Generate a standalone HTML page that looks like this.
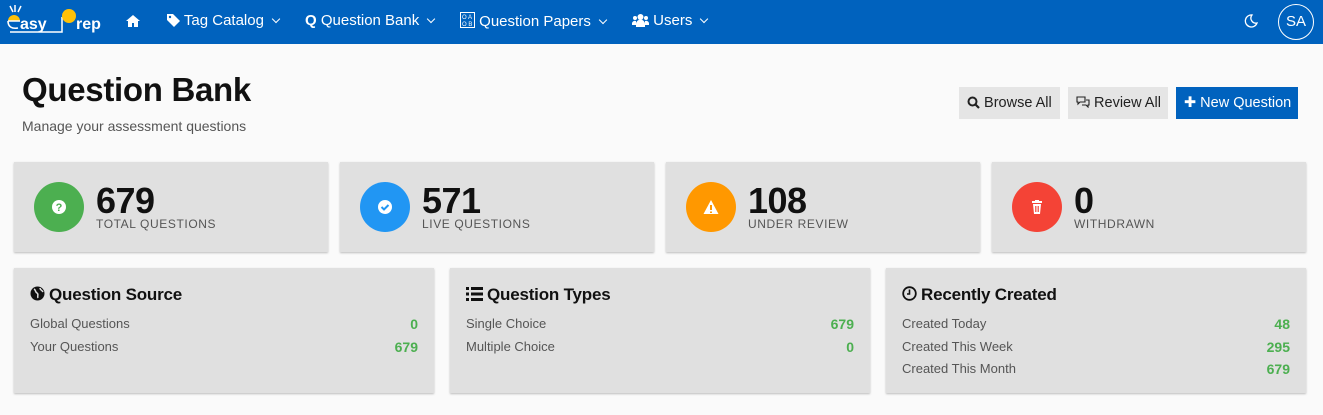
<!DOCTYPE html>
<html><head><style>
*{box-sizing:border-box;margin:0;padding:0}
body{width:1323px;height:415px;overflow:hidden;background:#fafafa;font-family:"Liberation Sans",sans-serif;position:relative}
.nav{position:absolute;left:0;top:0;width:1323px;height:44px;background:#0062be;color:#fff}
.ni{position:absolute;top:12px;font-size:15px;white-space:nowrap}
.ni svg{vertical-align:-2px}
.car{display:inline-block;width:6px;height:6px;border-right:1.3px solid #fff;border-bottom:1.3px solid #fff;transform:rotate(45deg);margin-left:9px;vertical-align:3px}
.av{position:absolute;left:1278px;top:4px;width:36px;height:36px;border:1.5px solid #fff;border-radius:50%;font-size:15px;text-align:center;line-height:33px}
h1{position:absolute;left:22px;top:71px;font-size:33px;font-weight:bold;color:#111;letter-spacing:-0.3px}
.sub{position:absolute;left:22px;top:118px;font-size:14px;color:#555}
.btn{position:absolute;top:87px;height:32px;line-height:32px;font-size:14.5px;background:#e5e5e5;color:#222;padding-left:8px}
.btn.b{background:#0062be;color:#fff}
.sc{position:absolute;top:162px;width:314px;height:90px;background:#e0e0e0;box-shadow:0 1px 2px rgba(0,0,0,.25)}
.ci{position:absolute;left:20px;top:20px;width:50px;height:50px;border-radius:50%}
.ci svg{position:absolute;left:17px;top:17px}
.num{position:absolute;left:82px;top:18px;font-size:36px;font-weight:bold;color:#111;letter-spacing:-0.5px}
.lab{position:absolute;left:82px;top:55px;font-size:12px;color:#555;letter-spacing:0.6px}
.bc{position:absolute;top:268px;width:420px;height:125px;background:#e0e0e0;box-shadow:0 1px 2px rgba(0,0,0,.25)}
.bt{position:absolute;left:16px;top:17px;font-size:17px;font-weight:bold;color:#111;letter-spacing:-0.2px}
.bt svg{vertical-align:-1px;margin-right:4px}
.r{position:absolute;left:16px;right:16px;font-size:13px;color:#555}
.r b{position:absolute;right:0;top:0;color:#4caf50;font-size:14px}
</style></head><body>
<div class="nav">
 <svg width="110" height="44" style="position:absolute;left:0;top:0">
  <path d="M10 6l3 6M15 5v7M21 6l-3 6" stroke="#fff" stroke-width="1.5"/>
  <path d="M8 21a6 6 0 0 1 12 0z" fill="#ffc107"/>
  <path d="M8 21h12M8 21c0 6 4 8 10 7" stroke="#fff" stroke-width="1.6" fill="none"/>
  <path d="M10 32h52V17" stroke="#fff" stroke-width="1.5" fill="none"/>
  <circle cx="69" cy="16" r="7" fill="#ffc107"/>
  <text x="20" y="29" font-size="16" font-weight="bold" fill="#fff" font-family="Liberation Sans">asy</text>
  <text x="76" y="29" font-size="16" font-weight="bold" fill="#fff" font-family="Liberation Sans">rep</text>
 </svg>
 <div class="ni" style="left:126px"><svg width="14" height="12" viewBox="0 0 14 12"><path d="M7 0L0 6h2v6h4V8h2v4h4V6h2z" fill="#fff"/></svg></div>
 <div class="ni" style="left:167px"><svg width="13" height="13" viewBox="0 0 13 13"><path d="M0 0h6l7 7-6 6-7-7z" fill="#fff"/><circle cx="3" cy="3" r="1.2" fill="#0062be"/></svg> Tag Catalog<span class="car"></span></div>
 <div class="ni" style="left:305px"><b>Q</b> Question Bank<span class="car"></span></div>
 <div class="ni" style="left:460px"><svg width="15" height="16" viewBox="0 0 15 16"><rect x=".5" y=".5" width="14" height="15" fill="none" stroke="#fff"/><text x="2" y="7" font-size="6" fill="#fff" font-family="Liberation Sans">O A</text><text x="2" y="14" font-size="6" fill="#fff" font-family="Liberation Sans">O B</text></svg> Question Papers<span class="car"></span></div>
 <div class="ni" style="left:632px"><svg width="17" height="13" viewBox="0 0 17 13"><circle cx="8.5" cy="3" r="3" fill="#fff"/><circle cx="3" cy="4" r="2" fill="#fff"/><circle cx="14" cy="4" r="2" fill="#fff"/><path d="M4 13v-3a4 4 0 0 1 9 0v3zM0 11v-2a3 3 0 0 1 4-2v4zM17 11v-2a3 3 0 0 0-4-2v4z" fill="#fff"/></svg> Users<span class="car"></span></div>
 <div class="ni" style="left:1244px;top:13px"><svg width="14" height="14" viewBox="0 0 14 14"><path d="M8 1a6 6 0 1 0 5 8A5 5 0 0 1 8 1z" fill="none" stroke="#fff" stroke-width="1.3"/></svg></div>
 <div class="av">SA</div>
</div>
<h1>Question Bank</h1>
<div class="sub">Manage your assessment questions</div>
<div class="btn" style="left:959px;width:101px"><svg width="13" height="13" viewBox="0 0 13 13" style="vertical-align:-2px"><circle cx="5.5" cy="5.5" r="4" fill="none" stroke="#222" stroke-width="2"/><path d="M8.5 8.5l3.5 3.5" stroke="#222" stroke-width="2.2"/></svg> Browse All</div>
<div class="btn" style="left:1068px;width:100px"><svg width="14" height="12" viewBox="0 0 14 12" style="vertical-align:-1px"><path d="M1 1h8v5H4l-2 2V6H1zM10 4h3v5h-1v2l-2-2H6" fill="none" stroke="#222" stroke-width="1.1"/></svg> Review All</div>
<div class="btn b" style="left:1176px;width:122px">&#10010; New Question</div>

<div class="sc" style="left:14px"><div class="ci" style="background:#4caf50"><svg width="16" height="16" viewBox="0 0 16 16"><circle cx="8" cy="8" r="7" fill="#fff"/><text x="8" y="12" font-size="11" font-weight="bold" text-anchor="middle" fill="#4caf50" font-family="Liberation Sans">?</text></svg></div><div class="num">679</div><div class="lab">TOTAL QUESTIONS</div></div>
<div class="sc" style="left:340px"><div class="ci" style="background:#2196f3"><svg width="16" height="16" viewBox="0 0 16 16"><circle cx="8" cy="8" r="7" fill="#fff"/><path d="M4.5 8l2.5 2.5 4.5-4.5" stroke="#2196f3" stroke-width="2" fill="none"/></svg></div><div class="num">571</div><div class="lab">LIVE QUESTIONS</div></div>
<div class="sc" style="left:666px"><div class="ci" style="background:#ff9800"><svg width="16" height="16" viewBox="0 0 16 16"><path d="M8 1l7.5 14H.5z" fill="#fff"/><path d="M8 6v5M8 12.5v1.5" stroke="#ff9800" stroke-width="2"/></svg></div><div class="num">108</div><div class="lab">UNDER REVIEW</div></div>
<div class="sc" style="left:992px"><div class="ci" style="background:#f44336"><svg width="16" height="16" viewBox="0 0 16 16"><path d="M3 2h10v2H3zM6 1h4v1H6zM4 5h8l-1 10H5z" fill="#fff"/><path d="M6.5 7v6M8 7v6M9.5 7v6" stroke="#f44336" stroke-width=".8"/></svg></div><div class="num">0</div><div class="lab">WITHDRAWN</div></div>

<div class="bc" style="left:14px"><div class="bt"><svg width="15" height="15" viewBox="0 0 15 15"><circle cx="7.5" cy="7.5" r="7" fill="#111"/><path d="M4 3c2 1 1 3 3 4s0 3 1 5M10 2c0 2 2 2 3 4" stroke="#e0e0e0" stroke-width="1.5" fill="none"/></svg>Question Source</div>
<div class="r" style="top:48px">Global Questions<b>0</b></div><div class="r" style="top:71px">Your Questions<b>679</b></div></div>
<div class="bc" style="left:450px"><div class="bt"><svg width="17" height="14" viewBox="0 0 17 14"><path d="M0 0h3v3H0zM0 5.5h3v3H0zM0 11h3v3H0zM5 0h12v3H5zM5 5.5h12v3H5zM5 11h12v3H5z" fill="#111"/></svg>Question Types</div>
<div class="r" style="top:48px">Single Choice<b>679</b></div><div class="r" style="top:71px">Multiple Choice<b>0</b></div></div>
<div class="bc" style="left:886px"><div class="bt"><svg width="15" height="15" viewBox="0 0 15 15"><circle cx="7.5" cy="7.5" r="6.3" fill="none" stroke="#111" stroke-width="1.8"/><path d="M7.5 3.5v4.5H5" stroke="#111" stroke-width="1.6" fill="none"/></svg>Recently Created</div>
<div class="r" style="top:48px">Created Today<b>48</b></div><div class="r" style="top:71px">Created This Week<b>295</b></div><div class="r" style="top:93px">Created This Month<b>679</b></div></div>
</body></html>
